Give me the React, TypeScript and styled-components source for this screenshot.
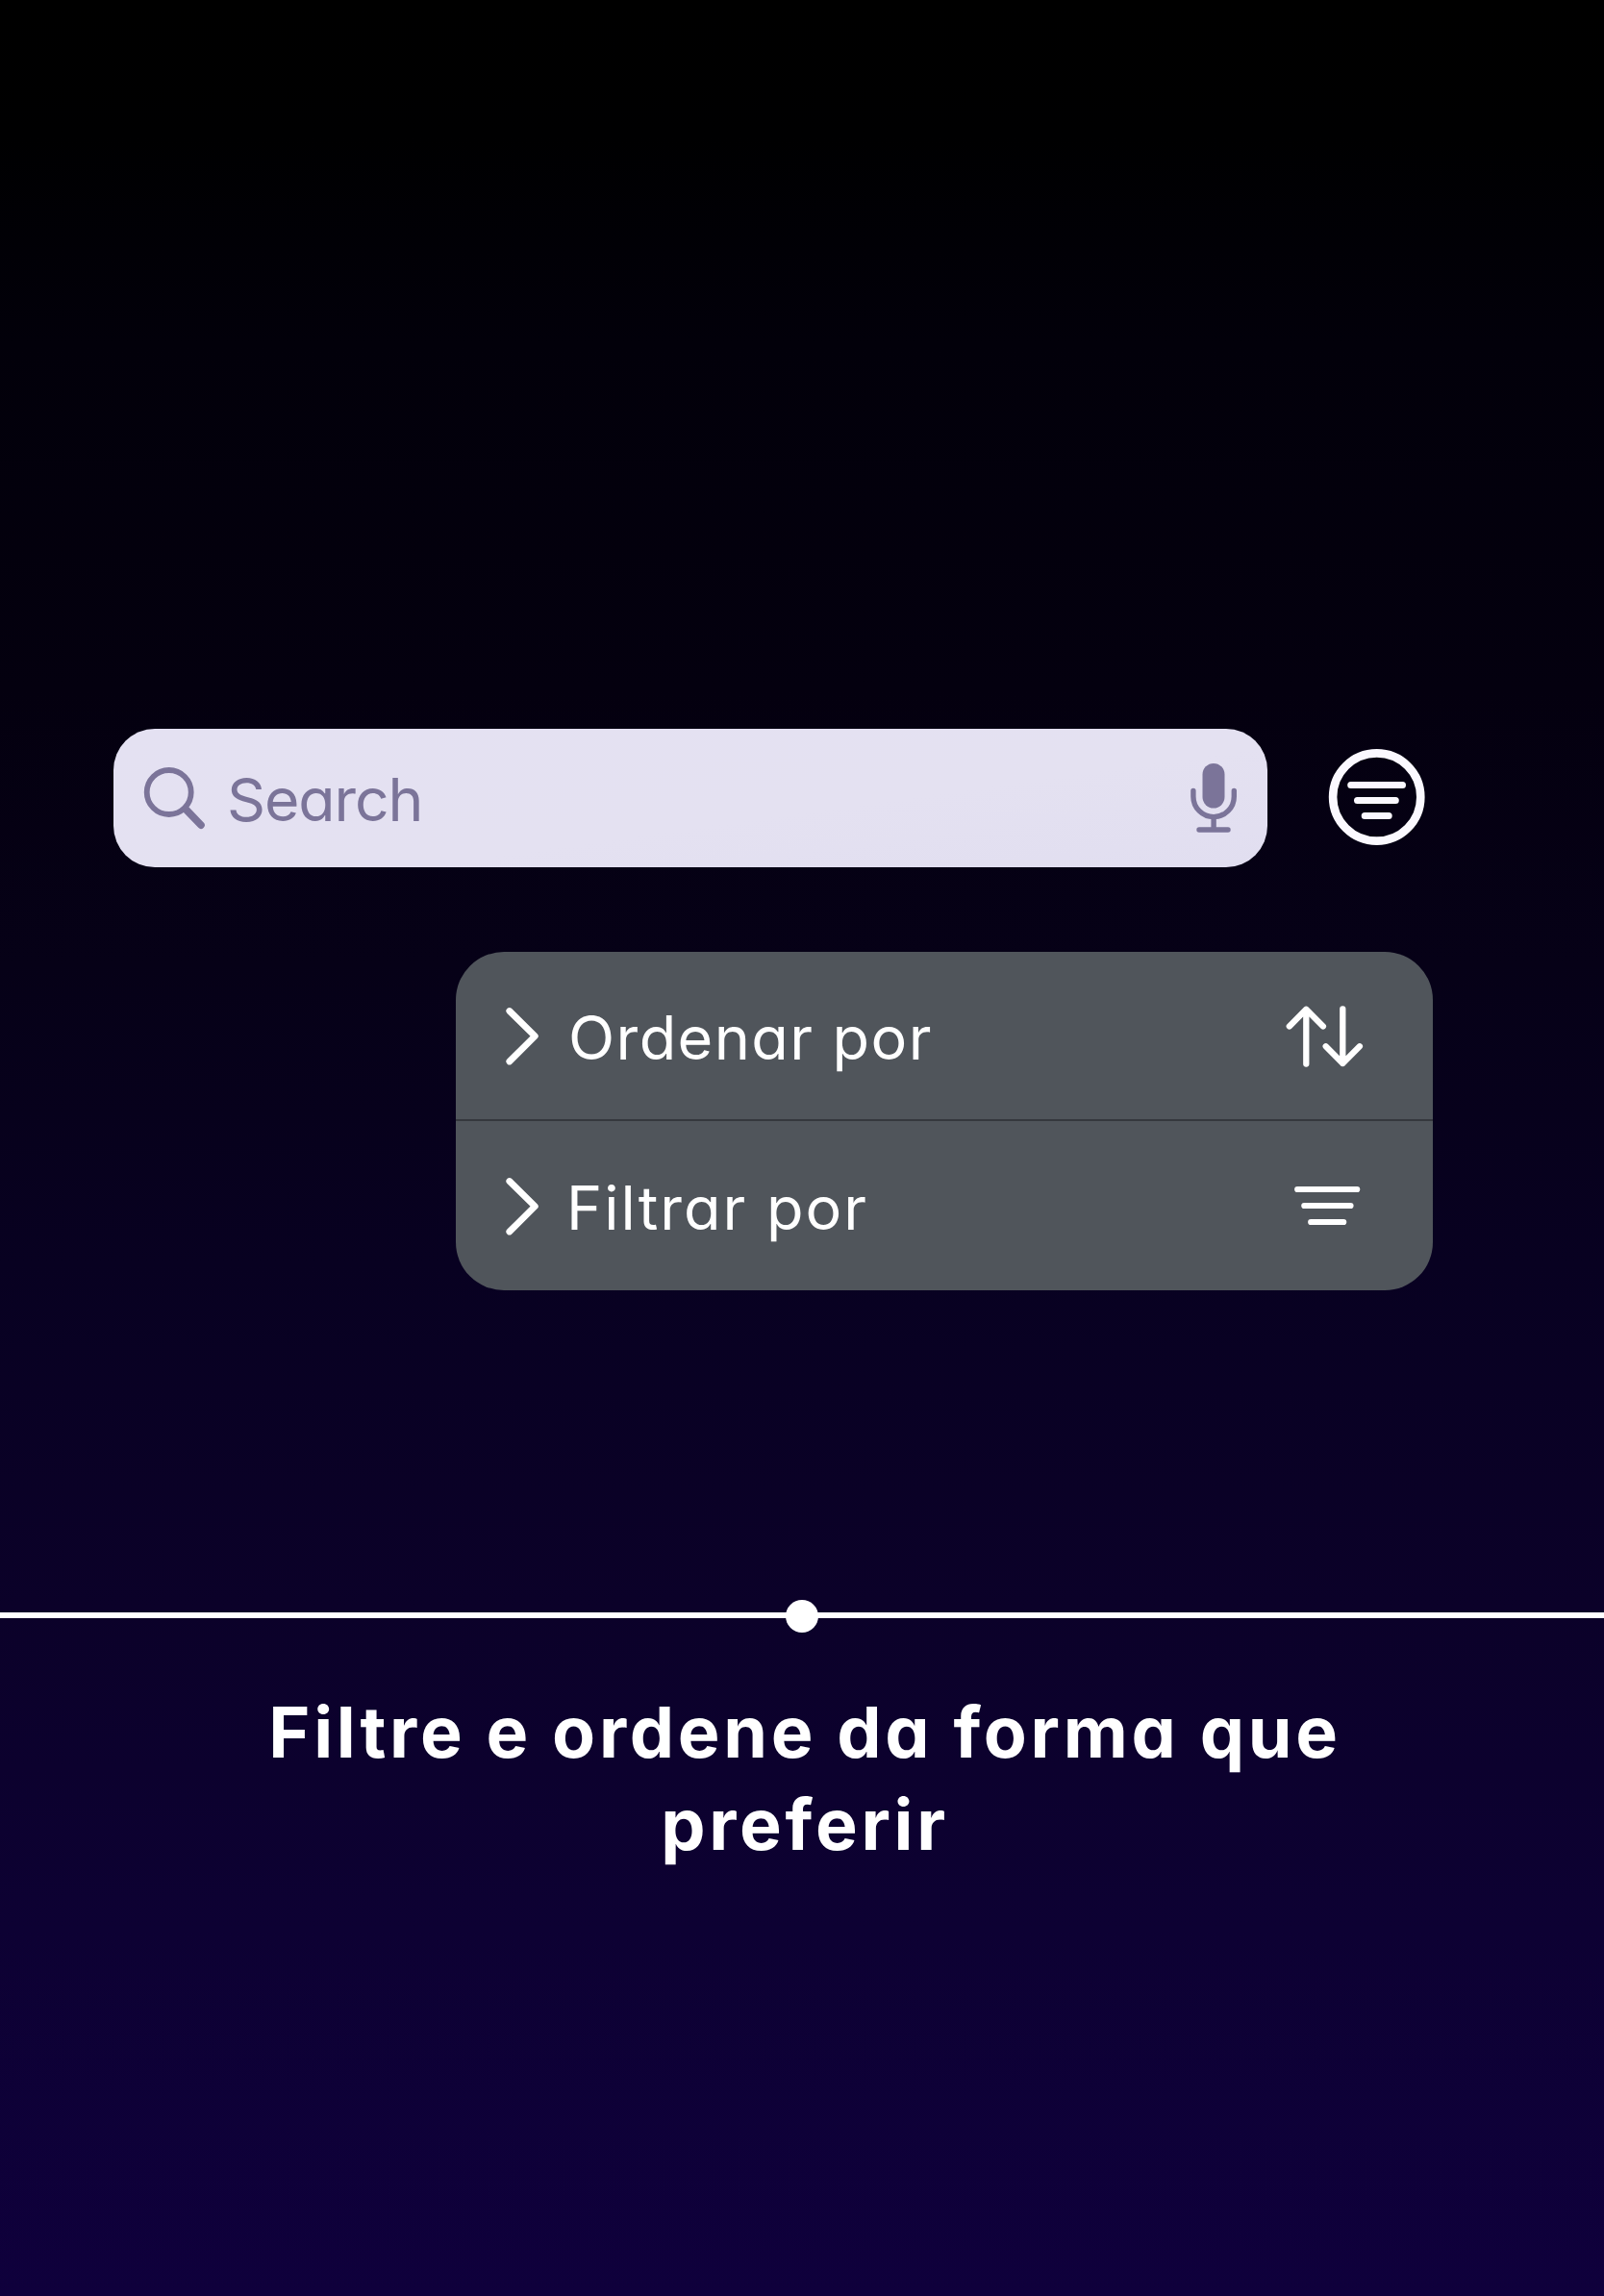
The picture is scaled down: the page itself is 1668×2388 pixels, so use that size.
import React from "react";
import styled, { createGlobalStyle } from "styled-components";

const GlobalStyle = createGlobalStyle`
  *, *::before, *::after { box-sizing: border-box; }
  html, body { margin: 0; background: #000; }
  body {
    font-family: Inter, "Noto Sans", sans-serif;
    font-feature-settings: "cv11" 1;
    -webkit-font-smoothing: antialiased;
  }
`;

const Page = styled.main`
  display: flex;
  flex-direction: column;
  width: 1668px;
  height: 2388px;
  padding-top: 758px;
  overflow: hidden;
  background: linear-gradient(
    180deg,
    #000000 0%,
    #000001 6%,
    #02000a 15%,
    #04000f 30%,
    #060117 42%,
    #080121 55%,
    #0b0129 70%,
    #0d0133 84%,
    #0f003c 100%
  );
`;

const Toolbar = styled.div`
  display: flex;
  align-items: center;
  height: 144px;
  padding-left: 118px;
`;

const SearchField = styled.div`
  display: flex;
  align-items: center;
  width: 1200px;
  height: 144px;
  padding: 0 28px 0 28px;
  border-radius: 43px;
  background: linear-gradient(172deg, #e4e1f2 0%, #e4e1f1 60%, #e1def0 100%);
  color: #7b7499;
`;

const SearchLabel = styled.span`
  flex: 1;
  padding: 2px 0 0 22px;
  font-size: 62.5px;
  line-height: 76px;
  letter-spacing: -1.1px;
`;

const FilterButton = styled.button`
  display: flex;
  margin: 0 0 3px 62px;
  padding: 0;
  border: 0;
  background: none;
  color: #fbf9ff;
`;

const Icon = styled.svg`
  display: block;
  flex: none;
  fill: none;
  stroke: currentColor;
  stroke-linecap: round;
  stroke-linejoin: round;
`;

const Menu = styled.div`
  width: 1016px;
  height: 352px;
  margin: 88px 0 0 474px;
  border-radius: 50px;
  overflow: hidden;
  background: #50555b;
  color: #fff;
`;

const MenuItem = styled.div<{ $divided?: boolean }>`
  display: flex;
  align-items: center;
  height: 176px;
  padding: 0 72px 0 50px;
  border-bottom: ${(p) => (p.$divided ? "2px solid #35383d" : "0")};
`;

const MenuLabel = styled.span<{ $tracking: number; $indent: number }>`
  flex: 1;
  padding: 3px 0 0 ${(p) => p.$indent}px;
  font-size: 63px;
  line-height: 76px;
  letter-spacing: ${(p) => p.$tracking}px;
`;

const Divider = styled.div`
  display: flex;
  align-items: center;
  justify-content: center;
  height: 34px;
  margin-top: 322px;
  background: linear-gradient(#fff, #fff) 0 13px / 100% 6px no-repeat;
`;

const Dot = styled.span`
  width: 34px;
  height: 34px;
  border-radius: 50%;
  background: #fff;
`;

const Title = styled.h1`
  width: 1260px;
  margin: 56px auto 0;
  padding-left: 6px;
  color: #fff;
  font-size: 73.5px;
  font-weight: 700;
  line-height: 96px;
  letter-spacing: 3.7px;
  text-align: center;
`;

const SearchIcon = () => (
  <Icon width="68" height="72" viewBox="146 794 68 72">
    <circle cx="175.7" cy="824" r="23" strokeWidth="5.8" />
    <path d="M193.5 842 209 858.2" strokeWidth="7.6" />
  </Icon>
);

const MicIcon = () => (
  <Icon width="56" height="76" viewBox="1234 792 56 76">
    <rect x="1250.5" y="794" width="23" height="46.5" rx="11.5" fill="currentColor" stroke="none" />
    <path
      d="M1240.9 822.5v5.9a21.2 21.2 0 0 0 42.4 0v-5.9M1262.1 850v13M1247 863h30"
      strokeWidth="5.4"
    />
  </Icon>
);

const FilterCircleIcon = () => (
  <Icon width="104" height="104" viewBox="1380 776.5 104 104">
    <circle cx="1431.7" cy="828.5" r="45.6" strokeWidth="8.6" />
    <path d="M1404.7 816h53.8M1411.5 832h39.8M1419.2 848h25" strokeWidth="7" />
  </Icon>
);

const ChevronIcon = () => (
  <Icon width="40" height="64" viewBox="524 1045 40 64">
    <path d="M529.8 1051.5 556.3 1077.7 529.8 1104" strokeWidth="6.8" />
  </Icon>
);

const SortIcon = () => (
  <Icon width="84" height="68" viewBox="1334 1043 84 68">
    <path
      d="M1358.3 1106.5V1049.8M1340.8 1067.5 1358.3 1049.8 1375.9 1067.5M1396.3 1049.3V1106M1378.7 1088.3 1396.3 1106 1413.9 1088.3"
      strokeWidth="6.3"
    />
  </Icon>
);

const FilterIcon = () => (
  <Icon width="84" height="48" viewBox="1334 1230 84 48">
    <path d="M1349.2 1237h62M1356.3 1254h48.2M1363.2 1271h34" strokeWidth="6.2" />
  </Icon>
);

export default function App() {
  return (
    <>
      <GlobalStyle />
      <Page>
        <Toolbar>
          <SearchField>
            <SearchIcon />
            <SearchLabel>Search</SearchLabel>
            <MicIcon />
          </SearchField>
          <FilterButton aria-label="Filtrar">
            <FilterCircleIcon />
          </FilterButton>
        </Toolbar>
        <Menu>
          <MenuItem $divided>
            <ChevronIcon />
            <MenuLabel $tracking={1.4} $indent={27}>
              Ordenar por
            </MenuLabel>
            <SortIcon />
          </MenuItem>
          <MenuItem>
            <ChevronIcon />
            <MenuLabel $tracking={2} $indent={25}>
              Filtrar por
            </MenuLabel>
            <FilterIcon />
          </MenuItem>
        </Menu>
        <Divider>
          <Dot />
        </Divider>
        <Title>Filtre e ordene da forma que preferir</Title>
      </Page>
    </>
  );
}
